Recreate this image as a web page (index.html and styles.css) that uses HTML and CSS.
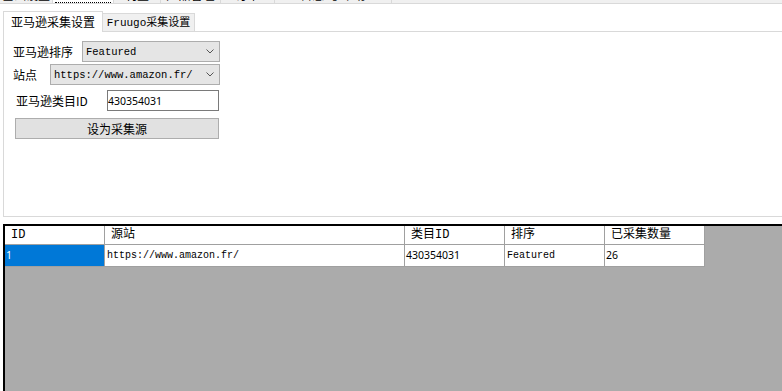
FILE: index.html
```html
<!DOCTYPE html>
<html>
    <head>
        <meta charset="utf-8">
        <title>采集设置</title>
        <link rel="stylesheet" href="styles.css">
    </head>
    <body>
        <div class="topbar">
            <div class="top-tab tt1"><span>基础设置</span></div>
            <div class="top-tab tt2 top-tab-active"><span class="focus">采集设置</span></div>
            <div class="top-tab tt3"><span>刊登</span></div>
            <div class="top-tab tt4"><span>产品管理</span></div>
            <div class="top-tab tt5"><span>订单</span></div>
            <div class="top-tab tt6"><span>日志 与 帮助</span></div>
        </div>

        <div class="main">
            <div class="tabbar">
                <div class="tab tab-active">亚马逊采集设置</div>
                <div class="tab">Fruugo采集设置</div>
                <div class="tab-fill"></div>
            </div>

            <div class="tabpage">
                <div class="form">
                    <div class="row">
                        <label class="lbl lbl-sort">亚马逊排序</label>
                        <div class="combo combo-sort">
                            <span>Featured</span>
                            <svg width="8" height="5" viewBox="0 0 8 5"><path d="M0.5 0.5 L4 4 L7.5 0.5" fill="none" stroke="#555" stroke-width="1"/></svg>
                        </div>
                    </div>
                    <div class="row row-site">
                        <label class="lbl lbl-site">站点</label>
                        <div class="combo combo-site">
                            <span>https://www.amazon.fr/</span>
                            <svg width="8" height="5" viewBox="0 0 8 5"><path d="M0.5 0.5 L4 4 L7.5 0.5" fill="none" stroke="#555" stroke-width="1"/></svg>
                        </div>
                    </div>
                    <div class="row row-cat">
                        <label class="lbl lbl-cat">亚马逊类目ID</label>
                        <input class="text-input" type="text" value="430354031">
                    </div>
                    <div class="row row-btn">
                        <button class="btn">设为采集源</button>
                    </div>
                </div>
            </div>

            <div class="grid">
                <table class="grid-table">
                    <tr class="head">
                        <td><div class="cell w-id">ID</div></td>
                        <td><div class="cell w-src">源站</div></td>
                        <td><div class="cell w-col">类目ID</div></td>
                        <td><div class="cell w-col">排序</div></td>
                        <td><div class="cell w-col">已采集数量</div></td>
                    </tr>
                    <tr class="data">
                        <td class="selected"><div class="cell w-id num">1</div></td>
                        <td><div class="cell w-src mono">https://www.amazon.fr/</div></td>
                        <td><div class="cell w-col num">430354031</div></td>
                        <td><div class="cell w-col mono">Featured</div></td>
                        <td><div class="cell w-col num">26</div></td>
                    </tr>
                </table>
            </div>
        </div>
    </body>
</html>
```

FILE: styles.css
```css
html, body {
    margin: 0;
    height: 100%;
}
body {
    display: flex;
    flex-direction: column;
    overflow: hidden;
    background-color: white;
    color: #000;
    font-size: 12px;
    font-family: "Noto Sans CJK SC", "Noto Sans", sans-serif;
}

/* outer tab strip, mostly scrolled off the top */
div.topbar {
    flex: none;
    display: flex;
    height: 4px;
    box-sizing: border-box;
    border-bottom: 1px solid #d9d9d9;
    background-color: #f0f0f0;
    overflow: hidden;
}
div.top-tab {
    box-sizing: border-box;
    height: 3px;
    border-right: 1px solid #d9d9d9;
    text-align: center;
    overflow: hidden;
}
div.top-tab > span {
    display: block;
    margin-top: -13px;
    line-height: 16px;
}
div.top-tab-active {
    background-color: white;
}
div.top-tab-active > span.focus {
    display: block;
    margin: -14px 2px 0;
    border-bottom: 1px dotted #000;
    color: transparent;
}
div.tt1 { width: 53px; }
div.tt2 { width: 61px; }
div.tt3 { width: 47px; }
div.tt4 { width: 60px; }
div.tt5 { width: 54px; }
div.tt6 { width: 117px; }

div.main {
    flex: 1;
    display: flex;
    flex-direction: column;
    padding-top: 7px;
    min-height: 0;
}

/* inner tab control */
div.tabbar {
    flex: none;
    display: flex;
    align-items: flex-end;
    height: 21px;
    margin-left: 3px;
}
div.tab {
    box-sizing: border-box;
    width: 92px;
    height: 19px;
    border: 1px solid #d9d9d9;
    border-left: none;
    background-color: #f0f0f0;
    text-align: center;
    line-height: 18px;
    font-family: "Liberation Mono", "Noto Sans CJK SC", monospace;
    font-size: 11px;
}
div.tab-active {
    width: 100px;
    height: 21px;
    border-left: 1px solid #d9d9d9;
    border-bottom: none;
    background-color: white;
    line-height: 20px;
    font-family: "Noto Sans CJK SC", sans-serif;
    font-size: 12px;
}
div.tab-fill {
    flex: 1;
    border-bottom: 1px solid #d9d9d9;
}
div.tabpage {
    flex: none;
    box-sizing: border-box;
    height: 185px;
    margin-left: 3px;
    border-left: 1px solid #d9d9d9;
    border-bottom: 1px solid #d9d9d9;
}

div.form {
    padding: 9px 0 0 9px;
}
div.row {
    display: flex;
    align-items: center;
    height: 21px;
}
div.row-site { margin-top: 2px; }
div.row-cat { margin-top: 5px; }
div.row-btn { margin-top: 7px; }

label.lbl {
    box-sizing: border-box;
    line-height: 21px;
    white-space: nowrap;
}
label.lbl-sort { width: 69px; }
label.lbl-site { width: 37px; }
label.lbl-cat {
    width: 91px;
    margin-left: 3px;
}

div.combo {
    box-sizing: border-box;
    display: flex;
    align-items: center;
    justify-content: space-between;
    height: 21px;
    padding: 0 5px 0 3px;
    border: 1px solid #adadad;
    background-color: #e5e5e5;
    font-family: "Liberation Mono", monospace;
    font-size: 10.5px;
}
div.combo-sort { width: 138px; }
div.combo-site { width: 170px; }

input.text-input {
    box-sizing: border-box;
    width: 112px;
    height: 21px;
    margin: 0;
    padding: 0;
    border: 1px solid #7a7a7a;
    outline: none;
    background-color: white;
    color: #000;
    font-family: "Noto Sans", sans-serif;
    font-size: 10.5px;
}

button.btn {
    box-sizing: border-box;
    width: 204px;
    height: 21px;
    margin: 0 0 0 2px;
    padding: 0;
    border: 1px solid #adadad;
    background-color: #e1e1e1;
    color: #000;
    font-family: "Noto Sans CJK SC", sans-serif;
    font-size: 12px;
    line-height: 19px;
}

/* data grid */
div.grid {
    flex: 1;
    margin: 7px 0 0 3px;
    border-top: 2px solid #000;
    border-left: 2px solid #000;
    background-color: #ababab;
}
table.grid-table {
    border-collapse: separate;
    border-spacing: 0;
    background-color: white;
}
table.grid-table td {
    padding: 0;
    border-right: 1px solid #a0a0a0;
    border-bottom: 1px solid #a0a0a0;
    vertical-align: middle;
}
div.cell {
    box-sizing: border-box;
    white-space: nowrap;
    overflow: hidden;
}
tr.head div.cell {
    height: 18px;
    line-height: 18px;
    padding-left: 6px;
    font-family: "Liberation Mono", "Noto Sans CJK SC", monospace;
    font-size: 12px;
}
tr.data div.cell {
    height: 21px;
    line-height: 21px;
    padding-left: 2px;
}
div.w-id { width: 99px; }
div.w-src { width: 299px; }
div.w-col { width: 99px; }
div.mono {
    font-family: "Liberation Mono", monospace;
    font-size: 10px;
}
div.num {
    font-family: "Noto Sans", sans-serif;
    font-size: 10.5px;
}
td.selected {
    background-color: #0078d7;
    color: white;
}
tr.data div.num { padding-left: 1px; }
```
